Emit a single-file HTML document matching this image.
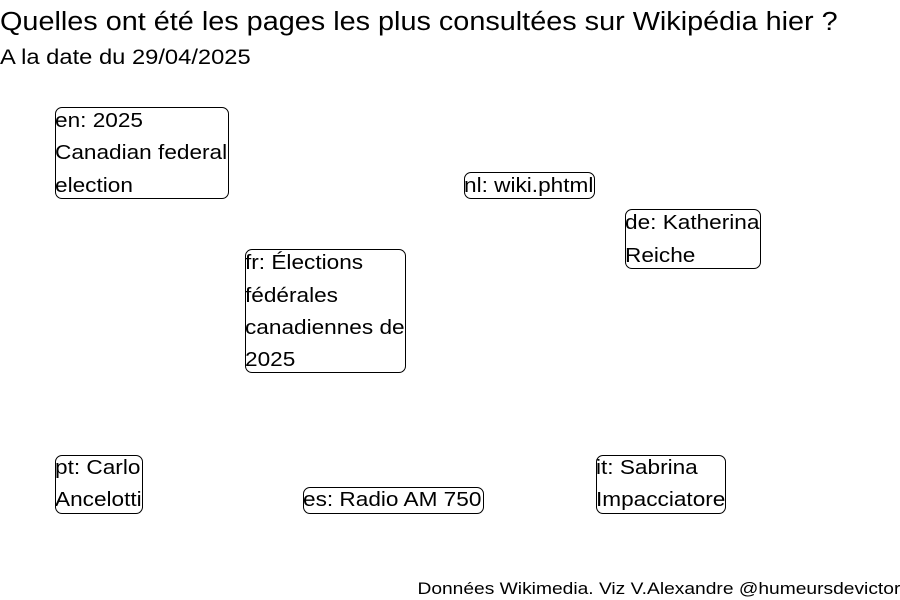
<!DOCTYPE html>
<html><head><meta charset="utf-8"><style>
body{margin:0;width:900px;height:600px;background:#fff;position:relative;overflow:hidden;font-family:"Liberation Sans",Arial,sans-serif;color:#000}
.t{position:absolute;white-space:nowrap;transform:scaleX(1.13);transform-origin:left top}
.b{position:absolute;border:1px solid #000;border-radius:7px;box-sizing:border-box}
.l{position:absolute;white-space:nowrap;font-size:20px;line-height:20px;transform:scaleX(1.13);transform-origin:left top}
</style></head><body>
<div class="t" style="left:0;top:8px;font-size:25.5px">Quelles ont été les pages les plus consultées sur Wikipédia hier ?</div>
<div class="t" style="left:0;top:46px;font-size:21px">A la date du 29/04/2025</div>

<div class="b" style="left:55px;top:107px;width:174px;height:92px"></div>
<div class="l" style="left:55px;top:111px">en: 2025</div>
<div class="l" style="left:55px;top:143px">Canadian federal</div>
<div class="l" style="left:55px;top:176px">election</div>

<div class="b" style="left:464px;top:172px;width:131px;height:27px"></div>
<div class="l" style="left:464px;top:176px">nl: wiki.phtml</div>

<div class="b" style="left:625px;top:209px;width:136px;height:60px"></div>
<div class="l" style="left:625px;top:213px">de: Katherina</div>
<div class="l" style="left:625px;top:246px">Reiche</div>

<div class="b" style="left:245px;top:249px;width:161px;height:124px"></div>
<div class="l" style="left:245px;top:253px">fr: Élections</div>
<div class="l" style="left:245px;top:286px">fédérales</div>
<div class="l" style="left:245px;top:318px">canadiennes de</div>
<div class="l" style="left:245px;top:350px">2025</div>

<div class="b" style="left:55px;top:455px;width:88px;height:59px"></div>
<div class="l" style="left:55px;top:458px">pt: Carlo</div>
<div class="l" style="left:55px;top:490px">Ancelotti</div>

<div class="b" style="left:303px;top:487px;width:181px;height:27px"></div>
<div class="l" style="left:303px;top:490px">es: Radio AM 750</div>

<div class="b" style="left:596px;top:455px;width:130px;height:59px"></div>
<div class="l" style="left:596px;top:458px">it: Sabrina</div>
<div class="l" style="left:596px;top:490px">Impacciatore</div>

<div class="t" style="right:0;top:579px;font-size:17px;transform-origin:right top">Données Wikimedia. Viz V.Alexandre @humeursdevictor</div>
</body></html>
